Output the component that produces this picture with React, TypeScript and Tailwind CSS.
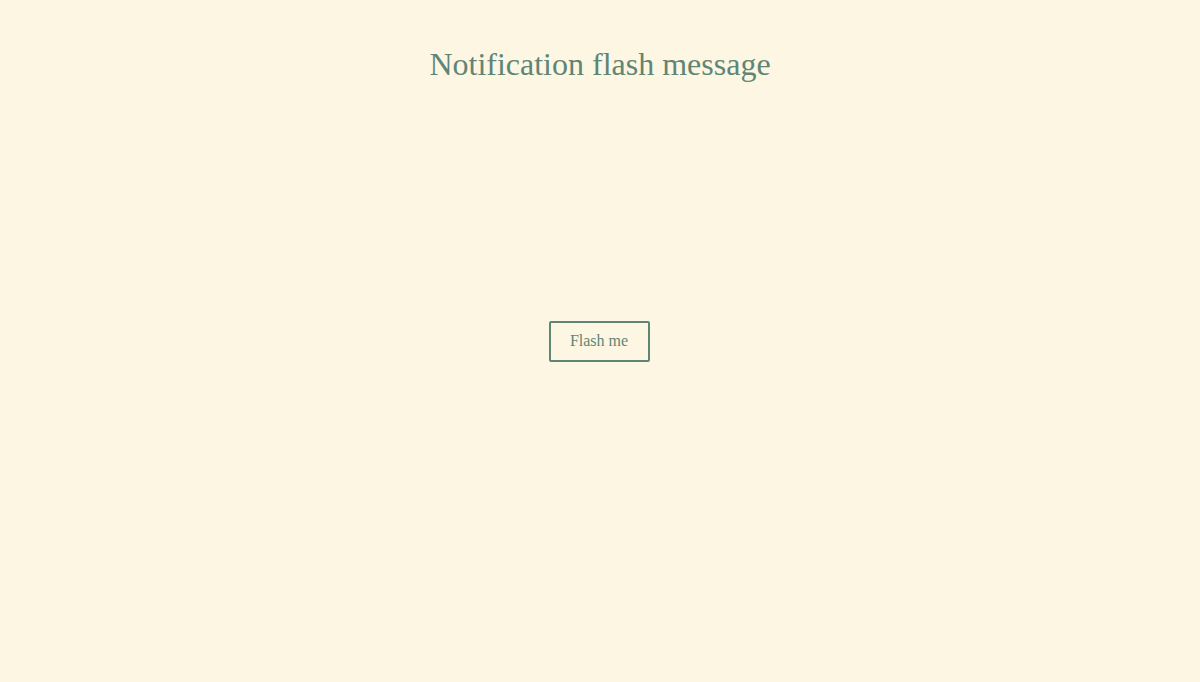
export default function App() {
  return (
    <div
      className="grid h-screen w-full bg-[#fdf6e3] text-[#5f8576]"
      style={{ fontFamily: '"Liberation Serif", "Times New Roman", serif' }}
    >
      <h1 className="col-start-1 row-start-1 self-start pt-[46px] text-center text-[32px] leading-[1.15] font-normal">
        Notification flash message
      </h1>
      <div className="col-start-1 row-start-1 flex items-center justify-center pr-[2px]">
        <button
          type="button"
          className="flex h-[41px] w-[101px] items-center justify-center rounded-[2px] border-2 border-[#5f8576] bg-transparent text-[16px] text-[#5f8576]"
        >
          Flash me
        </button>
      </div>
    </div>
  );
}
